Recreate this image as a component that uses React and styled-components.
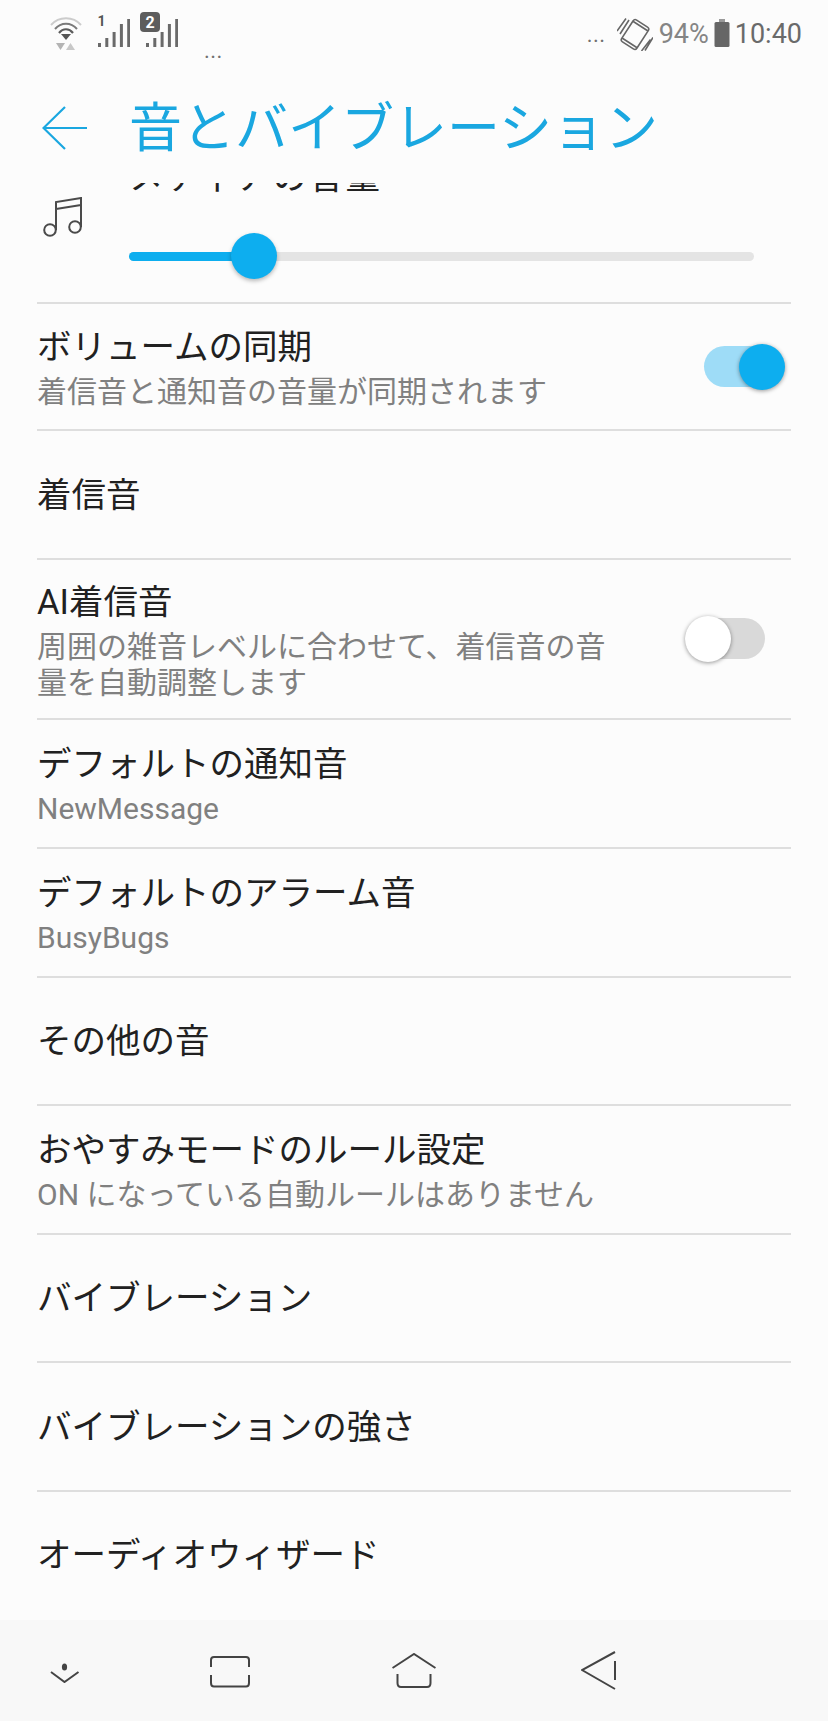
import React from "react";
import styled, { createGlobalStyle } from "styled-components";

const cjk = `"Roboto", "Noto Sans CJK JP", "Noto Sans", sans-serif`;
const accent = "#1aa7e0";
const knobBlue = "#0daeef";
const volume = 0.2;
const trackWidth = 625;

const GlobalStyle = createGlobalStyle`
  html, body {
    margin: 0;
    padding: 0;
    background: #fcfcfc;
  }
`;

const Screen = styled.div`
  width: 828px;
  height: 1721px;
  display: flex;
  flex-direction: column;
  overflow: hidden;
  background: #fcfcfc;
  font-family: ${cjk};
`;

const StatusBar = styled.div`
  height: 72px;
  flex: none;
  display: flex;
  justify-content: space-between;
  padding: 0 26px 0 50px;
  color: #6a6a6a;
`;

const StatusLeft = styled.div`
  display: flex;
  align-items: flex-start;
  gap: 10px;
  padding-top: 12px;
`;

const StatusRight = styled.div`
  display: flex;
  align-items: center;
  height: 69px;
`;

const Dots = styled.span`
  font-family: "Roboto", sans-serif;
  font-size: 22px;
  line-height: 1;
  letter-spacing: 0.5px;
  color: #707070;
  margin: ${(props) => props.$margin};
`;

const StatusText = styled.span`
  font-family: "Roboto", sans-serif;
  font-size: ${(props) => props.$size}px;
  line-height: 1;
  color: ${(props) => props.$color};
  margin-left: ${(props) => props.$left}px;
`;

const BatteryWrap = styled.div`
  margin: -3px 0 0 5px;
  display: flex;
`;

const Header = styled.div`
  height: 108px;
  flex: none;
  box-sizing: border-box;
  display: flex;
  align-items: center;
  padding: 4px 0 0 42px;
  gap: 42px;
`;

const Title = styled.h1`
  margin: 2px 0 0;
  font-size: 53px;
  font-weight: 400;
  line-height: 1;
  color: ${accent};
`;

const VolumeRow = styled.div`
  height: 121px;
  flex: none;
  display: flex;
  margin: 3px 0 0 37px;
  width: 754px;
  box-sizing: border-box;
  border-bottom: 2px solid #dedede;
  overflow: hidden;
`;

const MusicIcon = styled.svg`
  width: 40px;
  height: 40px;
  margin: 14px 0 0 6px;
  flex: none;
`;

const VolumeBody = styled.div`
  display: flex;
  flex-direction: column;
  margin-left: 46px;
`;

const VolumeLabel = styled.div`
  margin-top: -26px;
  font-size: 34.5px;
  line-height: 40px;
  letter-spacing: 2px;
  white-space: nowrap;
  color: #222;
`;

const Track = styled.div`
  position: relative;
  margin-top: 55px;
  width: ${trackWidth}px;
  height: 9px;
  border-radius: 5px;
  background: #e4e4e4;
`;

const TrackFill = styled.div`
  height: 100%;
  border-radius: 5px;
  background: ${knobBlue};
`;

const TrackKnob = styled.div`
  position: absolute;
  top: -19px;
  width: 46px;
  height: 46px;
  border-radius: 50%;
  background: ${knobBlue};
  box-shadow: 0 2px 4px rgba(0, 0, 0, 0.28);
`;

const List = styled.div`
  flex: 1;
  display: flex;
  flex-direction: column;
`;

const Row = styled.div`
  height: ${(props) => props.$height}px;
  flex: none;
  box-sizing: border-box;
  width: 754px;
  margin-left: 37px;
  display: flex;
  align-items: center;
  justify-content: space-between;
  border-bottom: ${(props) => (props.$last ? "none" : "2px solid #dedede")};
`;

const RowText = styled.div`
  display: flex;
  flex-direction: column;
  width: ${(props) => (props.$narrow ? "575px" : "auto")};
  padding-bottom: ${(props) => props.$bottom}px;
`;

const RowTitle = styled.div`
  font-size: 34.5px;
  line-height: 54px;
  color: #212121;
`;

const RowSub = styled.div`
  font-size: 30px;
  line-height: 36px;
  color: #808080;
`;

const Switch = styled.div`
  position: relative;
  width: 80px;
  height: 41px;
  border-radius: 21px;
  flex: none;
  background: ${(props) => (props.$on ? "#9edcf7" : "#d9d9d9")};
  margin: ${(props) => (props.$on ? "0 7px 0 0" : "0 26px 2px 0")};
`;

const SwitchKnob = styled.div`
  position: absolute;
  top: -2px;
  ${(props) => (props.$on ? "right: -1px;" : "left: 0;")}
  width: 46px;
  height: 46px;
  border-radius: 50%;
  background: ${(props) => (props.$on ? knobBlue : "#fff")};
  box-shadow: 0 1px 4px rgba(0, 0, 0, 0.4);
`;

const NavBar = styled.div`
  height: 101px;
  flex: none;
  background: #f8f8f8;
  display: flex;
  align-items: flex-start;
`;

const NavIcon = styled.svg`
  flex: none;
  margin-top: ${(props) => props.$top}px;
  margin-left: ${(props) => props.$left}px;
  fill: none;
  stroke: #444;
  stroke-width: 2;
`;

const WifiIcon = () => (
  <svg width="32" height="38" viewBox="0 -6 32 38" fill="none">
    <path d="M1 7 C9 -2 23 -2 31 7" stroke="#cccccc" strokeWidth="2" />
    <path d="M5 11 C11 4 21 4 27 11" stroke="#7a7a7a" strokeWidth="2" />
    <path d="M9 15 C13 10 19 10 23 15" stroke="#5c5c5c" strokeWidth="2.2" />
    <path d="M11 16 L21 16 L16 22 Z" fill="#555" />
    <path d="M6 25 L15 25 L10.5 32 Z" fill="#b4b4b4" />
    <path d="M20.5 25 L25 32 L16 32 Z" fill="#c8c8c8" />
  </svg>
);

const SignalIcon = ({ badge }) => (
  <svg width="38" height="38" viewBox="0 0 38 38">
    {[4, 9, 15, 23, 28].map((h, i) => (
      <rect key={h} x={6 + i * 7.3} y={35 - h} width="3" height={h} fill="#6a6a6a" />
    ))}
    {badge ? (
      <>
        <rect x="0" y="0" width="20" height="20" rx="4" fill="#5d5d5d" />
        <text x="10" y="15.5" textAnchor="middle" fontSize="16" fontWeight="700" fontFamily="Roboto" fill="#fff">
          2
        </text>
      </>
    ) : (
      <text x="9.5" y="14" textAnchor="middle" fontSize="14" fontWeight="700" fontFamily="Roboto" fill="#555">
        1
      </text>
    )}
  </svg>
);

const VibrateIcon = () => (
  <svg width="36" height="33" viewBox="0 0 36 33" fill="none" stroke="#666" strokeWidth="1.6">
    <g transform="rotate(33 18 16.5)">
      <rect x="9" y="3.5" width="18" height="26" rx="2.5" />
      <path d="M9 6.5 H27 M9 26.5 H27" />
    </g>
    <path d="M0 13 L9 0.5 M3 16 L12 2 M28 32.5 L36 19.5 M24.5 33 L33.5 21.5" />
  </svg>
);

const BatteryIcon = () => (
  <svg width="16" height="28" viewBox="0 0 16 28">
    <rect x="5" y="0" width="6" height="3" fill="#9a9a9a" />
    <rect x="0.5" y="3" width="15" height="25" rx="1.5" fill="#666" />
  </svg>
);

const items = [
  { title: "ボリュームの同期", sub: "着信音と通知音の音量が同期されます", height: 127, toggle: "on", bottom: 3 },
  { title: "着信音", height: 129, bottom: 0 },
  {
    title: "AI着信音",
    sub: "周囲の雑音レベルに合わせて、着信音の音量を自動調整します",
    height: 160,
    toggle: "off",
    narrow: true,
    bottom: 2,
  },
  { title: "デフォルトの通知音", sub: "NewMessage", height: 129, bottom: 3 },
  { title: "デフォルトのアラーム音", sub: "BusyBugs", height: 129, bottom: 3 },
  { title: "その他の音", height: 128, bottom: 0 },
  { title: "おやすみモードのルール設定", sub: "ON になっている自動ルールはありません", height: 129, bottom: 3 },
  { title: "バイブレーション", height: 128, bottom: 0 },
  { title: "バイブレーションの強さ", height: 129, bottom: 0 },
  { title: "オーディオウィザード", height: 128, last: true, bottom: 2 },
];

const App = () => (
  <Screen>
    <GlobalStyle />
    <StatusBar>
      <StatusLeft>
        <WifiIcon />
        <SignalIcon />
        <SignalIcon badge />
        <Dots $margin="28px 0 0 16px">...</Dots>
      </StatusLeft>
      <StatusRight>
        <Dots $margin="0 11px 0 0">...</Dots>
        <VibrateIcon />
        <StatusText $size={27} $color="#858585" $left={6}>
          94%
        </StatusText>
        <BatteryWrap>
          <BatteryIcon />
        </BatteryWrap>
        <StatusText $size={27} $color="#6a6a6a" $left={5}>
          10:40
        </StatusText>
      </StatusRight>
    </StatusBar>
    <Header>
      <svg width="45" height="44" viewBox="0 0 45 44" fill="none" stroke={accent} strokeWidth="2.2">
        <path d="M23 1 L1.5 22 L23 43 M1.5 22 L45 22" />
      </svg>
      <Title>音とバイブレーション</Title>
    </Header>
    <VolumeRow>
      <MusicIcon viewBox="0 0 40 40" fill="none" stroke="#4a4a4a" strokeWidth="2">
        <circle cx="7" cy="33" r="5.8" />
        <circle cx="32" cy="30" r="5.8" />
        <path d="M13 33 V5 L38 1 V30 M13 12 L38 8" />
      </MusicIcon>
      <VolumeBody>
        <VolumeLabel>メディアの音量</VolumeLabel>
        <Track>
          <TrackFill style={{ width: trackWidth * volume }} />
          <TrackKnob style={{ left: trackWidth * volume - 23 }} />
        </Track>
      </VolumeBody>
    </VolumeRow>
    <List>
      {items.map((item) => (
        <Row key={item.title} $height={item.height} $last={item.last}>
          <RowText $narrow={item.narrow} $bottom={item.bottom}>
            <RowTitle>{item.title}</RowTitle>
            {item.sub && <RowSub>{item.sub}</RowSub>}
          </RowText>
          {item.toggle && (
            <Switch $on={item.toggle === "on"}>
              <SwitchKnob $on={item.toggle === "on"} />
            </Switch>
          )}
        </Row>
      ))}
    </List>
    <NavBar>
      <NavIcon $left={50} $top={43} width="30" height="20" viewBox="0 0 30 20">
        <ellipse cx="14.5" cy="4" rx="2.6" ry="3.6" fill="#444" stroke="none" />
        <path d="M1 9 L14.5 19 L28.5 9" />
      </NavIcon>
      <NavIcon $left={130} $top={36} width="40" height="32" viewBox="0 0 40 32">
        <path d="M1 11 V4 Q1 1 4 1 H36 Q39 1 39 4 V11 M1 19 V27 Q1 30.5 4 30.5 H36 Q39 30.5 39 27 V19" />
      </NavIcon>
      <NavIcon $left={142} $top={33} width="44" height="36" viewBox="0 0 44 36">
        <path d="M0.5 15 L22 1 L43.5 15 M5.5 21 V30 Q5.5 34 9 34 H35 Q38.5 34 38.5 30 V21" />
      </NavIcon>
      <NavIcon $left={145} $top={30} width="35" height="41" viewBox="0 0 35 41">
        <path d="M34 2 L1 20 L34 39 M34 11 V30" />
      </NavIcon>
    </NavBar>
  </Screen>
);

export default App;
